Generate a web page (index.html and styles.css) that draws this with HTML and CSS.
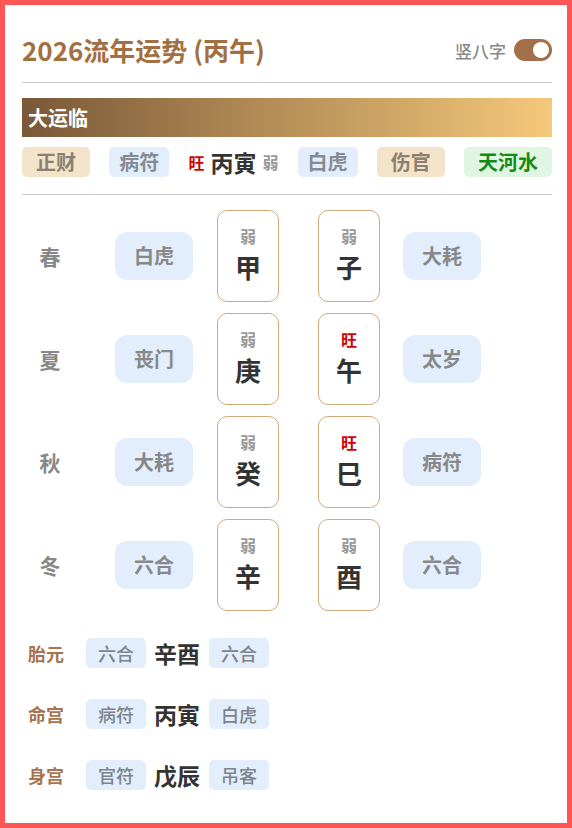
FILE: index.html
```html
<!DOCTYPE html>
<html lang="zh-CN">
<head>
    <meta charset="UTF-8">
    <meta name="viewport" content="width=device-width, initial-scale=1.0">
    <title>2026流年运势</title>
    <link rel="stylesheet" href="styles.css">
</head>
<body>
    <div class="card">
        <div class="header">
            <h2 class="title">2026流年运势 (丙午)</h2>
            <div class="switch-box">
                <span>竖八字</span>
                <span class="switch"><span class="knob"></span></span>
            </div>
        </div>

        <div class="banner">大运临</div>

        <div class="dayun">
            <span class="tag tag-gold">正财</span>
            <span class="tag tag-blue">病符</span>
            <span class="gz">
                <span class="wang">旺</span>
                <b>丙寅</b>
                <span class="ruo">弱</span>
            </span>
            <span class="tag tag-blue">白虎</span>
            <span class="tag tag-gold">伤官</span>
            <span class="tag tag-green">天河水</span>
        </div>

        <div class="seasons">
            <div class="season-row">
                <span class="season">春</span>
                <span class="big-tag">白虎</span>
                <div class="pillar"><span class="ruo">弱</span><span class="char">甲</span></div>
                <div class="pillar second"><span class="ruo">弱</span><span class="char">子</span></div>
                <span class="big-tag last">大耗</span>
            </div>
            <div class="season-row">
                <span class="season">夏</span>
                <span class="big-tag">丧门</span>
                <div class="pillar"><span class="ruo">弱</span><span class="char">庚</span></div>
                <div class="pillar second"><span class="wang">旺</span><span class="char">午</span></div>
                <span class="big-tag last">太岁</span>
            </div>
            <div class="season-row">
                <span class="season">秋</span>
                <span class="big-tag">大耗</span>
                <div class="pillar"><span class="ruo">弱</span><span class="char">癸</span></div>
                <div class="pillar second"><span class="wang">旺</span><span class="char">巳</span></div>
                <span class="big-tag last">病符</span>
            </div>
            <div class="season-row">
                <span class="season">冬</span>
                <span class="big-tag">六合</span>
                <div class="pillar"><span class="ruo">弱</span><span class="char">辛</span></div>
                <div class="pillar second"><span class="ruo">弱</span><span class="char">酉</span></div>
                <span class="big-tag last">六合</span>
            </div>
        </div>

        <div class="palaces">
            <div class="palace">
                <span class="palace-name">胎元</span>
                <span class="small-tag">六合</span>
                <b>辛酉</b>
                <span class="small-tag">六合</span>
            </div>
            <div class="palace">
                <span class="palace-name">命宫</span>
                <span class="small-tag">病符</span>
                <b>丙寅</b>
                <span class="small-tag">白虎</span>
            </div>
            <div class="palace">
                <span class="palace-name">身宫</span>
                <span class="small-tag">官符</span>
                <b>戊辰</b>
                <span class="small-tag">吊客</span>
            </div>
        </div>
    </div>
</body>
</html>
```

FILE: styles.css
```css
body {
    margin: 0;
    font-family: "Noto Sans CJK SC", "Noto Sans", sans-serif;
    background-color: #fff;
}

.card {
    box-sizing: border-box;
    width: 572px;
    height: 828px;
    border: 5px solid #ff5555;
    padding: 0 15px 0 17px;
    background-color: #fff;
}

.header {
    display: flex;
    justify-content: space-between;
    align-items: center;
    padding: 25px 0 12px;
    border-bottom: 1px solid #cccccc;
}

.title {
    margin: 0;
    font-size: 26px;
    line-height: 40px;
    font-weight: 700;
    color: #a26f42;
}

.switch-box {
    display: flex;
    align-items: center;
    gap: 8px;
    font-size: 17px;
    font-weight: 500;
    color: #888;
}

.switch {
    display: flex;
    justify-content: flex-end;
    align-items: center;
    width: 38px;
    height: 22px;
    padding: 0 3px;
    box-sizing: border-box;
    border-radius: 11px;
    background-color: #a26f4a;
}

.knob {
    width: 16px;
    height: 16px;
    border-radius: 50%;
    background-color: #fff;
}

.banner {
    margin-top: 15px;
    height: 39px;
    line-height: 39px;
    padding-left: 6px;
    font-size: 20px;
    font-weight: 700;
    color: #fff;
    background: linear-gradient(to right, #7a5838, #f5c87a);
}

.dayun {
    display: flex;
    justify-content: space-between;
    align-items: center;
    margin-top: 10px;
    padding-bottom: 17px;
    border-bottom: 1px solid #cccccc;
}

.tag {
    height: 30px;
    line-height: 30px;
    padding: 0 10px;
    border-radius: 5px;
    font-size: 20px;
    font-weight: 700;
}

.tag-gold {
    padding: 0 14px;
    background-color: #f2e3c9;
    color: #8a7f72;
}

.tag-blue {
    background-color: #e2eefc;
    color: #858b93;
}

.tag-green {
    padding: 0 14px;
    background-color: #e0f6e2;
    color: #158a15;
}

.gz {
    display: flex;
    align-items: center;
    gap: 6px;
    height: 30px;
    line-height: 30px;
}

.gz b {
    font-size: 23px;
    color: #333;
}

.wang {
    font-size: 16px;
    font-weight: 700;
    color: #d40000;
}

.ruo {
    font-size: 16px;
    font-weight: 700;
    color: #999;
}

.seasons {
    padding-top: 15px;
}

.season-row {
    display: flex;
    align-items: center;
    margin-bottom: 11px;
}

.season {
    width: 56px;
    text-align: center;
    font-size: 21px;
    font-weight: 700;
    color: #888;
}

.big-tag {
    width: 78px;
    height: 48px;
    line-height: 48px;
    margin-left: 37px;
    margin-right: 24px;
    text-align: center;
    border-radius: 12px;
    background-color: #e2eefc;
    font-size: 20px;
    font-weight: 700;
    color: #888;
}

.big-tag.last {
    margin-left: 23px;
    margin-right: 0;
}

.pillar {
    box-sizing: border-box;
    display: flex;
    flex-direction: column;
    align-items: center;
    width: 62px;
    height: 92px;
    padding-top: 13px;
    border: 1px solid #cfab7c;
    border-radius: 10px;
}

.pillar.second {
    margin-left: 39px;
}

.pillar .ruo,
.pillar .wang {
    line-height: 24px;
}

.pillar .char {
    font-size: 26px;
    line-height: 38px;
    font-weight: 700;
    color: #333;
}

.palaces {
    padding: 16px 0 0 6px;
}

.palace {
    display: flex;
    align-items: center;
    gap: 8px;
    height: 30px;
    margin-bottom: 31px;
}

.palace-name {
    margin-right: 14px;
    font-size: 18px;
    font-weight: 700;
    color: #a87350;
}

.palace b {
    margin-right: 1px;
    font-size: 23px;
    line-height: 30px;
    color: #333;
}

.small-tag {
    height: 30px;
    line-height: 30px;
    padding: 0 12px;
    border-radius: 5px;
    background-color: #e2eefc;
    font-size: 18px;
    font-weight: 500;
    color: #7d838b;
}
```
